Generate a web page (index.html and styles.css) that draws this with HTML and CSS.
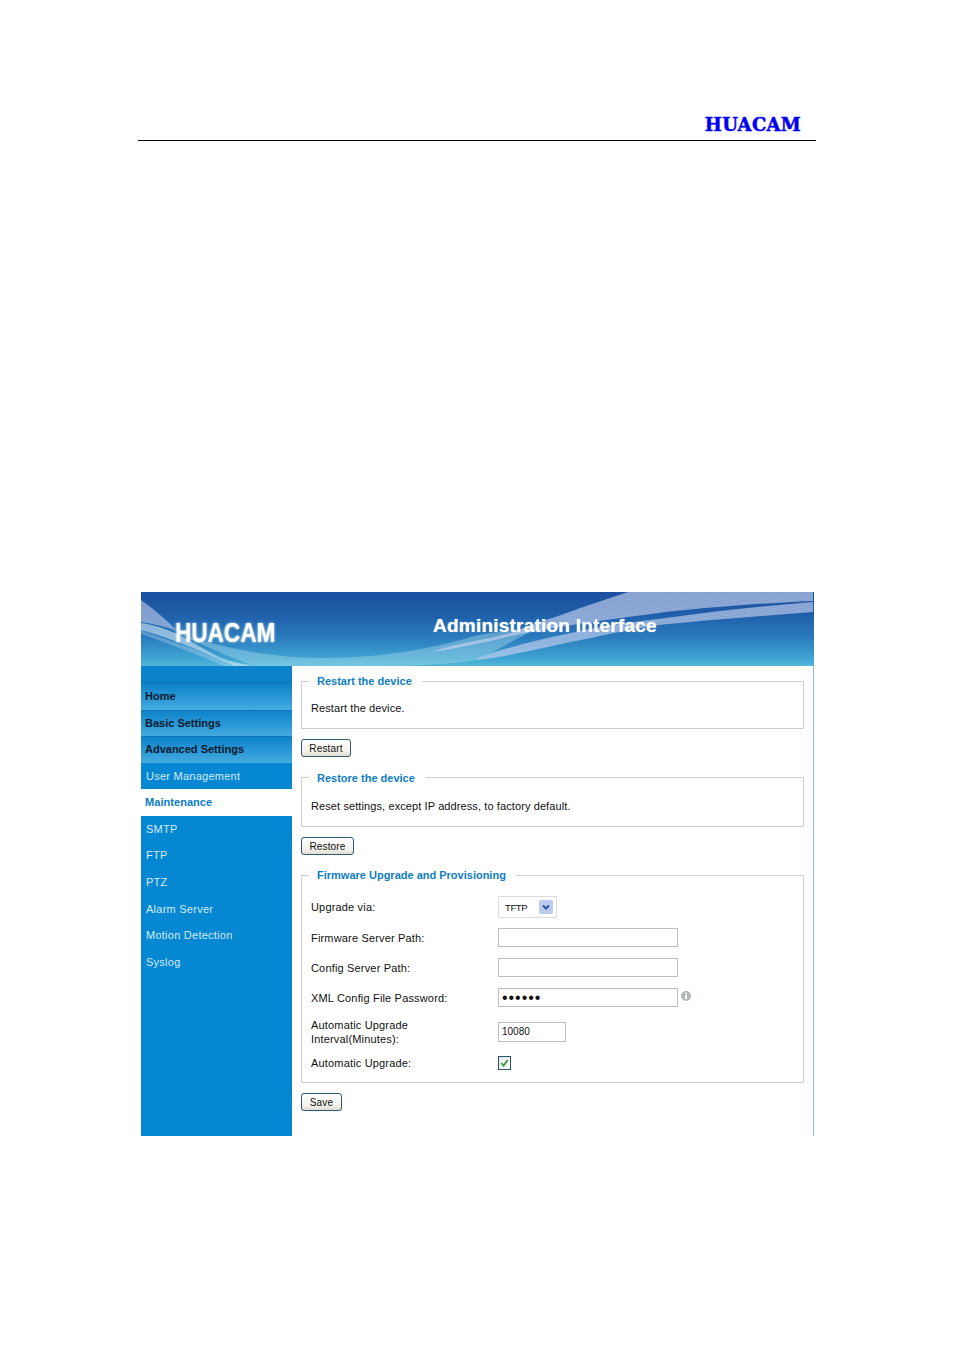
FILE: index.html
```html
<!DOCTYPE html>
<html lang="en">
<head>
<meta charset="utf-8">
<title>HUACAM Administration Interface</title>
<link rel="stylesheet" href="styles.css">
</head>
<body>
<header class="doc-head"><span class="doc-brand">HUACAM</span></header>
<main class="app">
  <div class="banner">
    <svg class="swoosh" viewBox="0 0 673 74" preserveAspectRatio="none" aria-hidden="true">
      <defs>
        <pattern id="hatch" width="8" height="2" patternUnits="userSpaceOnUse" patternTransform="rotate(-6)">
          <rect width="8" height="2" fill="#c2cdec" fill-opacity=".6"/>
          <rect width="8" height="1" fill="#e6eaf7" fill-opacity=".2"/>
        </pattern>
      </defs>
      <path d="M0 8 C14 18 26 28 36 39 C24 34 12 32 0 30Z" fill="#c4cdea" fill-opacity=".6"/>
      <path d="M0 31 C14 33 24 37 34 41 C52 50 64 58 80 66 C90 70 102 72 114 74 L94 74 C62 60 30 46 0 38Z" fill="#d3e8f4" fill-opacity=".6"/>
      <path d="M0 38 C22 46 44 54 64 61 C76 66 86 70 97 74 L84 74 C54 62 24 50 0 42Z" fill="#cfe9f4" fill-opacity=".3"/>
      <path d="M34 40 C70 52 120 66 180 66 C250 66 300 54 337 43 L400 34 L337 68 C300 74 250 74 210 74 L114 74 C90 66 60 52 34 40Z" fill="#a9dbec" fill-opacity=".42"/>
      <path d="M290 60 C320 50 345 48 370 41 C390 33 405 28 420 23 C445 14 466 7 487 0 L672 0 L672 9 C620 11 560 16 517 21 C480 26 430 32 370 44 C345 50 320 56 290 60Z" fill="url(#hatch)"/>
      <path d="M337 66 C370 54 400 47 430 41 C460 34 490 30 517 27 C570 20 620 14 672 10 L672 20 C620 24 570 28 517 33 C490 37 460 44 430 50 C400 56 370 64 337 68Z" fill="url(#hatch)"/>
    </svg>
    <span class="logo">HUACAM</span>
    <h1 class="title">Administration Interface</h1>
  </div>
  <nav class="side">
    <div class="side-top"></div>
    <a class="nav nav-group">Home</a>
    <a class="nav nav-group">Basic Settings</a>
    <a class="nav nav-group">Advanced Settings</a>
    <a class="nav">User Management</a>
    <a class="nav nav-active">Maintenance</a>
    <a class="nav">SMTP</a>
    <a class="nav">FTP</a>
    <a class="nav">PTZ</a>
    <a class="nav">Alarm Server</a>
    <a class="nav">Motion Detection</a>
    <a class="nav">Syslog</a>
  </nav>
  <section class="panel">
    <fieldset class="box box-restart">
      <legend class="box-title">Restart the device</legend>
      <p class="box-text">Restart the device.</p>
    </fieldset>
    <button class="btn btn-restart" type="button">Restart</button>
    <fieldset class="box box-restore">
      <legend class="box-title">Restore the device</legend>
      <p class="box-text">Reset settings, except IP address, to factory default.</p>
    </fieldset>
    <button class="btn btn-restore" type="button">Restore</button>
    <fieldset class="box box-firmware">
      <legend class="box-title">Firmware Upgrade and Provisioning</legend>
      <div class="row row-select">
        <label class="lbl">Upgrade via:</label>
        <div class="select"><span class="select-value">TFTP</span><span class="select-arrow"><svg viewBox="0 0 14 14" width="14" height="14" aria-hidden="true"><path d="M4 5.500 L7 8.500 L10 5.500" fill="none" stroke="#2a559f" stroke-width="2"/></svg></span></div>
      </div>
      <div class="row row-path">
        <label class="lbl">Firmware Server Path:</label>
        <input class="field field-long" type="text">
      </div>
      <div class="row row-path">
        <label class="lbl">Config Server Path:</label>
        <input class="field field-long" type="text">
      </div>
      <div class="row row-path row-pass">
        <label class="lbl">XML Config File Password:</label>
        <input class="field field-long field-pass" type="password" value="123456">
        <svg class="info" viewBox="0 0 10 10" width="10" height="10" aria-hidden="true"><circle cx="5" cy="5" r="5" fill="#b4b8b8"/><rect x="4" y="4" width="2" height="4" fill="#fff"/><rect x="4" y="1.800" width="2" height="1.400" fill="#fff"/></svg>
      </div>
      <div class="row row-interval">
        <label class="lbl">Automatic Upgrade<br>Interval(Minutes):</label>
        <input class="field field-short" type="text" value="10080">
      </div>
      <div class="row row-check">
        <label class="lbl">Automatic Upgrade:</label>
        <span class="check"><svg viewBox="0 0 12 12" width="12" height="12" aria-hidden="true"><path d="M2.500 6 L5 9 L9.500 2.800" fill="none" stroke="#3c9a3c" stroke-width="2"/></svg></span>
      </div>
    </fieldset>
    <button class="btn btn-save" type="button">Save</button>
  </section>
</main>
</body>
</html>
```
FILE: styles.css
```css
html, body { margin: 0; padding: 0; background: #fff; }
body { font-family: "Liberation Sans", Arial, sans-serif; height: 1351px; overflow: hidden; }

.doc-head {
  box-sizing: border-box;
  width: 678px;
  height: 141px;
  margin-left: 138px;
  padding: 0 15px 4px 0;
  border-bottom: 1px solid #000;
  display: flex;
  justify-content: flex-end;
  align-items: flex-end;
}
.doc-brand {
  font-family: "DejaVu Serif", serif;
  font-weight: 700;
  font-size: 18px;
  line-height: 22px;
  letter-spacing: .3px;
  color: #0000f0;
  -webkit-text-stroke: .5px #0000f0;
}

.app {
  width: 673px;
  height: 544px;
  margin: 451px 0 0 141px;
  display: grid;
  grid-template-columns: 151px 1fr;
  grid-template-rows: 74px 1fr;
}

.banner {
  grid-column: 1 / 3;
  position: relative;
  overflow: hidden;
  display: flex;
  background: linear-gradient(180deg, #1c4f9f 0%, #1f5ea9 30%, #2a7cbe 62%, #40a4d3 90%, #52b8d8 100%);
}
.swoosh { position: absolute; inset: 0; width: 100%; height: 100%; }
.logo {
  position: relative;
  margin: 27px 0 0 34px;
  width: 224px;
  flex: none;
  height: 28px;
  font-weight: 700;
  font-size: 27px;
  line-height: 28px;
  color: #fff;
  transform: scaleX(.835);
  transform-origin: left center;
  text-shadow: 0 0 3px #d8ecf8;
}
.title {
  position: relative;
  margin: 23px 0 0 34px;
  font-weight: 700;
  font-size: 19px;
  line-height: 22px;
  letter-spacing: .22px;
  color: #fff;
  white-space: nowrap;
  text-shadow: 0 0 1px #cfe4f4;
}

.side {
  background: #0587d1;
  display: flex;
  flex-direction: column;
}
.side-top { height: 17px; background: linear-gradient(180deg, #0b83cc, #0a7fc6); }
.nav {
  height: 26.6px;
  box-sizing: border-box;
  padding: 0 0 1px 5px;
  display: flex;
  align-items: center;
  font-size: 11px;
  letter-spacing: .25px;
  color: #d4ebf8;
}
.nav-group {
  padding-left: 4px;
  background: linear-gradient(180deg, #0f84cb 0%, #2a98d6 55%, #45abdf 100%);
  border-top: 1px solid #0a76b8;
  font-weight: 700;
  letter-spacing: 0;
  color: #07192c;
}
.nav-active {
  padding-left: 4px;
  background: #fff;
  font-weight: 700;
  letter-spacing: .05px;
  color: #0a7bc4;
}

.panel {
  box-sizing: border-box;
  padding: 8px 9px 0;
  border-right: 1px solid #86c4ec;
  display: flex;
  flex-direction: column;
  align-items: flex-start;
}

.box {
  box-sizing: border-box;
  width: 503px;
  margin: 0;
  padding: 0;
  border: 1px solid #cfcfcf;
  min-inline-size: 0;
}
.box-title {
  height: 14px;
  margin-left: 7px;
  padding: 0 10px 0 8px;
  font-weight: 700;
  font-size: 11px;
  line-height: 14px;
  color: #0f7dc0;
}
.box-restore .box-title { line-height: 16px; }
.box-text {
  margin: 0;
  padding-left: 9px;
  font-size: 11px;
  line-height: 14px;
  letter-spacing: .1px;
  color: #111;
}
.box-restart { height: 55px; }
.box-restart .box-text { padding-top: 13px; }
.box-restore { height: 57px; margin-top: 13px; }
.box-restore .box-text { padding-top: 15px; }
.box-firmware { height: 215px; margin-top: 13px; padding-top: 14px; }

.btn {
  box-sizing: border-box;
  height: 18px;
  padding: 1px 0 0;
  border: 1px solid #33586f;
  border-radius: 3px;
  background: linear-gradient(180deg, #fff, #f4f2ec 70%, #e0dcd0);
  font-family: inherit;
  font-size: 10px;
  line-height: 15px;
  letter-spacing: .15px;
  color: #111;
}
.btn-restart { width: 50px; margin-top: 10px; }
.btn-restore { width: 53px; margin-top: 10px; }
.btn-save { width: 41px; margin-top: 10px; }

.row {
  height: 20px;
  margin-top: 10px;
  padding-left: 9px;
  display: flex;
  align-items: center;
}
.lbl {
  flex: none;
  width: 187px;
  font-size: 11px;
  line-height: 14px;
  letter-spacing: .17px;
  color: #111;
}
.row-path .lbl { padding-top: 2px; }
.row-select { height: 22px; margin-top: 0; }
.row-select + .row { margin-top: 9px; }
.row-interval { height: 28px; margin-top: 11px; }
.row-check { margin-top: 7px; }

.field {
  box-sizing: border-box;
  height: 19px;
  margin: 0;
  padding: 0 3px;
  border: 1px solid #bdbdbd;
  background: #fff;
  font-family: inherit;
  font-size: 10px;
  color: #111;
}
.field-long { width: 180px; }
.field-short { width: 68px; height: 20px; padding-bottom: 2px; }
.field-pass { font-size: 16px; letter-spacing: .95px; padding-top: 1px; }

.select {
  box-sizing: border-box;
  width: 59px;
  height: 22px;
  border: 1px solid #dcdcdc;
  display: flex;
  align-items: center;
  justify-content: space-between;
  padding: 0 3px 0 6px;
}
.select-value { font-size: 9.5px; letter-spacing: -.4px; color: #111; }
.select-arrow {
  width: 14px;
  height: 14px;
  border-radius: 2px;
  background: #bccaf0;
  display: flex;
}

.info { margin: -2px 0 0 3px; }

.check {
  box-sizing: border-box;
  width: 13px;
  height: 14px;
  border: 1px solid #2c5070;
  background: linear-gradient(135deg, #dfe9e4, #fff);
  display: flex;
  align-items: center;
  justify-content: center;
}
```
